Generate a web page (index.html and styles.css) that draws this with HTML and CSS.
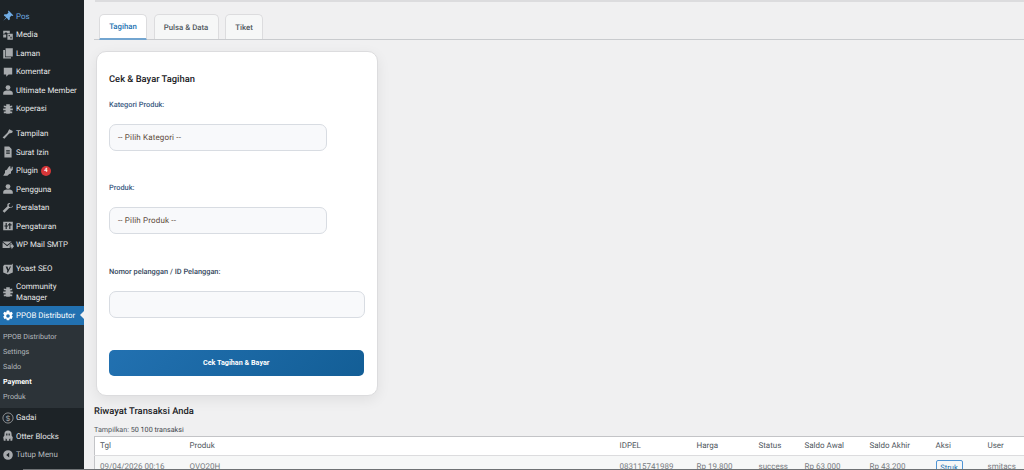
FILE: index.html
```html
<!DOCTYPE html>
<html lang="id">
<head>
<meta charset="utf-8">
<title>Payment</title>
<link rel="stylesheet" href="styles.css">
</head>
<body>
<div class="screen">
<aside class="sidebar">
  <ul class="menu">
    <li class="item first current-blue"><svg class="ic" viewBox="0 0 20 20"><path d="M11 1l8 8-2 1-1-1-3 3 0 4-2 1-3-4-6 5 5-6-4-3 1-2 4 0 3-3-1-1z"/></svg><span>Pos</span></li>
    <li class="item"><svg class="ic" viewBox="0 0 20 20"><path d="M2 3h11v4H9l-1-1H5L4 8H2zM9 8h9v10H9zm2 2v2h2v-2zm3 3v3h2v-3zM2 9h5v5H2z"/></svg><span>Media</span></li>
    <li class="item"><svg class="ic" viewBox="0 0 20 20"><path d="M6 2h12v14H6zM2 5h3v12h10v2H2z"/></svg><span>Laman</span></li>
    <li class="item"><svg class="ic" viewBox="0 0 20 20"><path d="M3 3h14v11h-6l-4 4v-4H3z"/></svg><span>Komentar</span></li>
    <li class="item"><svg class="ic" viewBox="0 0 20 20"><circle cx="10" cy="6" r="4"/><path d="M2 18v-3c0-3 4-4 8-4s8 1 8 4v3z"/></svg><span>Ultimate Member</span></li>
    <li class="item"><svg class="ic" viewBox="0 0 20 20"><path d="M7 2h6v3l4-1v3h-3v2h4v3h-4v2h3v3h-4v1H7v-1H3v-3h3v-2H2V9h4V7H3V4l4 1z"/></svg><span>Koperasi</span></li>
    <li class="item gap"><svg class="ic" viewBox="0 0 20 20"><path d="M12 2l6 3-1 3-5 1-8 9-3-2 8-8z"/></svg><span>Tampilan</span></li>
    <li class="item"><svg class="ic" viewBox="0 0 20 20"><path d="M4 1h8l4 4v14H4zm3 6v2h6V7zm0 4v2h6v-2z"/></svg><span>Surat Izin</span></li>
    <li class="item"><svg class="ic" viewBox="0 0 20 20"><path d="M12 2h2v4h2V3h2v5l-3 3v3l-3 1-3 3H2l3-5V9l3-1z"/></svg><span>Plugin</span><b class="badge">4</b></li>
    <li class="item"><svg class="ic" viewBox="0 0 20 20"><circle cx="10" cy="6" r="4"/><path d="M2 18v-3c0-3 4-4 8-4s8 1 8 4v3z"/></svg><span>Pengguna</span></li>
    <li class="item"><svg class="ic" viewBox="0 0 20 20"><path d="M18 6l-3 3-3-1-1-3 3-3c-3-1-6 1-5 5l-8 8 3 3 8-8c4 1 7-2 6-4z"/></svg><span>Peralatan</span></li>
    <li class="item"><svg class="ic" viewBox="0 0 20 20"><path fill-rule="evenodd" d="M2 3h16v14H2zm4 2v4H4v2h2v4h2v-4h2V9H8V5zm6 0v2h-2v2h2v6h2V9h2V7h-2V5z"/></svg><span>Pengaturan</span></li>
    <li class="item"><svg class="ic" viewBox="0 0 20 20"><path d="M1 4h15L8.500 10zM1 6l7.500 6L16 6v3h-3v6H1zM14 10h2V7l4 5-4 5v-3h-2z"/></svg><span>WP Mail SMTP</span></li>
    <li class="item gap-b"><svg class="ic" viewBox="0 0 20 20"><path fill-rule="evenodd" d="M4 3h12l2-2v15l-8 3-8-3V5zm2 3l3 7-1 3 2 0 5-10h-2l-2 5-2-5z"/></svg><span>Yoast SEO</span></li>
    <li class="item tall"><svg class="ic" viewBox="0 0 20 20"><path d="M7 2h6v3l4-1v3h-3v2h4v3h-4v2h3v3h-4v1H7v-1H3v-3h3v-2H2V9h4V7H3V4l4 1z"/></svg><span>Community<br>Manager</span></li>
    <li class="item active"><svg class="ic" viewBox="0 0 20 20"><path fill-rule="evenodd" d="M8 1h4l1 3 3-1 2 3-2 3 2 2-2 4-3-1-1 3H8l-1-3-3 1-2-4 2-2-2-3 2-3 3 1zm2 6a3 3 0 1 0 0 6 3 3 0 0 0 0-6z"/></svg><span>PPOB Distributor</span><i class="arrow"></i></li>
    <li class="submenu">
      <a>PPOB Distributor</a>
      <a>Settings</a>
      <a>Saldo</a>
      <a class="on">Payment</a>
      <a>Produk</a>
    </li>
    <li class="item"><svg class="ic" viewBox="0 0 20 20"><circle cx="10" cy="10" r="8.500" fill="none" stroke="currentColor" stroke-width="1.300"/><text x="10" y="14.500" class="dollar">$</text></svg><span>Gadai</span></li>
    <li class="item"><svg class="ic" viewBox="0 0 20 20"><path fill-rule="evenodd" d="M10 1a6 6 0 0 1 6 6v2l2 3-1 6h-3v-4l-2 1v3H8v-3l-2-1v4H3l-1-6 2-3V7a6 6 0 0 1 6-6zM7 6v3h2V6zm4 0v3h2V6z"/></svg><span>Otter Blocks</span></li>
    <li class="item muted"><svg class="ic" viewBox="0 0 20 20"><path fill-rule="evenodd" d="M10 2a8 8 0 1 1 0 16 8 8 0 0 1 0-16zm2 4l-5 4 5 4z"/></svg><span>Tutup Menu</span></li>
  </ul>
</aside>
<main class="content">
  <div class="notice-edge"></div>
  <nav class="tabs">
    <a class="tab selected">Tagihan</a>
    <a class="tab t2">Pulsa &amp; Data</a>
    <a class="tab t3">Tiket</a>
  </nav>
  <section class="card">
    <h2 class="card-title">Cek &amp; Bayar Tagihan</h2>
    <label class="lbl first-lbl">Kategori Produk:</label>
    <div class="field short">-- Pilih Kategori --</div>
    <label class="lbl">Produk:</label>
    <div class="field short">-- Pilih Produk --</div>
    <label class="lbl dark">Nomor pelanggan / ID Pelanggan:</label>
    <div class="field"></div>
    <button class="submit">Cek Tagihan &amp; Bayar</button>
  </section>
  <h2 class="history">Riwayat Transaksi Anda</h2>
  <p class="shown"><span>Tampilkan:</span> 50 100 transaksi</p>
  <table class="tx">
    <colgroup><col class="c1"><col class="c2"><col class="c3"><col class="c4"><col class="c5"><col class="c6"><col class="c7"><col class="c8"><col class="c9"></colgroup>
    <thead><tr><th>Tgl</th><th>Produk</th><th>IDPEL</th><th>Harga</th><th>Status</th><th>Saldo Awal</th><th>Saldo Akhir</th><th>Aksi</th><th>User</th></tr></thead>
    <tbody><tr><td>09/04/2026 00:16</td><td>OVO20H</td><td>083115741989</td><td>Rp 19.800</td><td>success</td><td>Rp 63.000</td><td>Rp 43.200</td><td><a class="struk">Struk</a></td><td>smitacs</td></tr></tbody>
  </table>
</main>
<div class="bottom-edge"></div>
</div>
</body>
</html>
```

FILE: styles.css
```css
* { box-sizing: border-box; }
html, body { margin: 0; padding: 0; height: 470px; overflow: hidden; }
body { background: #f0f0f1; font-family: Roboto, "Noto Sans", sans-serif; color: #2c3338; text-rendering: geometricPrecision; font-variant-ligatures: none; }
.screen { position: relative; display: flex; width: 1024px; height: 470px; overflow: hidden; }
.sidebar { width: 84px; flex: none; height: 470px; background: #1d2327; }
.menu { list-style: none; margin: 0; padding: 0; }
.item { position: relative; display: flex; align-items: center; height: 18.500px; font-size: 7.900px; color: #e6e7e8; padding-left: 2px; }
.item span { margin-left: 2px; line-height: 11px; white-space: nowrap; }
.first { margin-top: 6.800px; }
.current-blue { color: #72aee6; }
.gap { margin-top: 6.500px; }
.gap-b { margin-top: 5.500px; }
.tall { height: 28.700px; }
.ic { width: 12px; height: 12px; flex: none; fill: #a7aaad; color: #a7aaad; }
.current-blue .ic { fill: #72aee6; }
.badge { display: inline-flex; align-items: center; justify-content: center; width: 10px; height: 10px; margin-left: 3px; border-radius: 50%; background: #d63638; color: #fff; font-size: 6px; font-weight: 500; }
.active { height: 19px; background: #2271b1; color: #fff; }
.active .ic { fill: #fff; }
.arrow { position: absolute; right: 0; top: 5px; width: 0; height: 0; border: 4.500px solid transparent; border-right-color: #f0f0f1; border-left: 0; }
.submenu { display: flex; flex-direction: column; background: #2c3338; padding: 3.500px 0 4.500px; }
.submenu a { height: 15px; line-height: 15px; padding-left: 3px; font-size: 7.200px; color: #b4b9be; white-space: nowrap; }
.submenu a.on { color: #fff; font-weight: 700; }
.muted { color: #b4b9be; }
.dollar { font-size: 13px; text-anchor: middle; font-family: "Liberation Sans", sans-serif; }
.content { flex: 1; min-width: 0; display: flex; flex-direction: column; padding-left: 10px; }
.notice-edge { height: 2px; margin-left: 1px; background: #dcdcde; flex: none; }
.tabs { display: flex; gap: 6.500px; height: 26px; margin-top: 12px; padding-left: 5px; border-bottom: 1px solid #c9cbce; flex: none; }
.tab { display: flex; align-items: center; justify-content: center; height: 25px; font-size: 7.800px; font-weight: 500; color: #50575e; background: #f6f7f7; border: 1px solid #dcdcde; border-bottom: 0; border-radius: 5px 5px 0 0; }
.selected { width: 48px; color: #2271b1; background: #fff; border-bottom: 2px solid #72a5d0; height: 26px; }
.t2 { width: 65px; }
.t3 { width: 38px; }
.card { width: 282px; height: 345px; margin: 10.500px 0 0 1.500px; padding: 21px 12px 0 12.500px; background: #fff; border: 1px solid #dcdcde; border-radius: 10px; box-shadow: 0 4px 14px rgba(0, 0, 0, .07); flex: none; display: flex; flex-direction: column; }
.card-title { margin: 0; font-size: 9.400px; line-height: 14px; font-weight: 500; color: #1d2327; }
.lbl { margin-top: 31.500px; font-size: 7.400px; line-height: 12px; font-weight: 500; color: #3b5a82; }
.first-lbl { margin-top: 12px; }
.lbl.dark { color: #34475c; margin-top: 32px; }
.field { height: 27px; margin-top: 12.500px; padding-left: 8px; display: flex; align-items: center; font-size: 8px; letter-spacing: .15px; color: #5c4a3a; background: #f8f9fb; border: 1px solid #d8dce2; border-radius: 7px; flex: none; }
.field.short { margin-top: 13px; width: 218px; }
.submit { height: 26px; margin-top: 32px; margin-right: 1px; border: 0; border-radius: 5px; color: #fff; font-family: inherit; font-size: 7.200px; font-weight: 700; background: linear-gradient(135deg, #2271b1, #135e96); flex: none; }
.history { margin: 9px 0 0; font-size: 9.400px; line-height: 14px; font-weight: 500; color: #1d2327; }
.shown { margin: 6px 0 0; font-size: 7.200px; line-height: 10px; color: #3c434a; white-space: nowrap; }
.shown span { color: #50575e; }
.tx { width: 930px; table-layout: fixed; border-collapse: collapse; margin: 1px 0 0; background: #fff; border: 1px solid #c3c4c7; font-size: 8px; color: #50575e; }
.c1 { width: 90px; } .c2 { width: 430px; } .c3 { width: 77px; } .c4 { width: 62px; } .c5 { width: 46px; } .c6 { width: 65px; } .c7 { width: 66px; } .c8 { width: 52px; } .c9 { width: 42px; }
.tx th { height: 19px; padding: 0 0 0 5px; font-weight: 400; text-align: left; border-bottom: 1px solid #dcdcde; white-space: nowrap; }
.tx td { height: 24px; padding: 5px 0 0 5px; line-height: 11px; vertical-align: top; background: #f6f7f7; color: #787c82; white-space: nowrap; }
.struk { display: block; width: 27px; height: 16px; margin-top: -1px; text-align: center; line-height: 14px; color: #2271b1; background: #f6f7f7; border: 1px solid #4f94d4; border-radius: 2px; font-size: 7.500px; }
.bottom-edge { position: absolute; left: 23px; right: 0; bottom: 0; height: 1px; background: #6f7275; }
```
